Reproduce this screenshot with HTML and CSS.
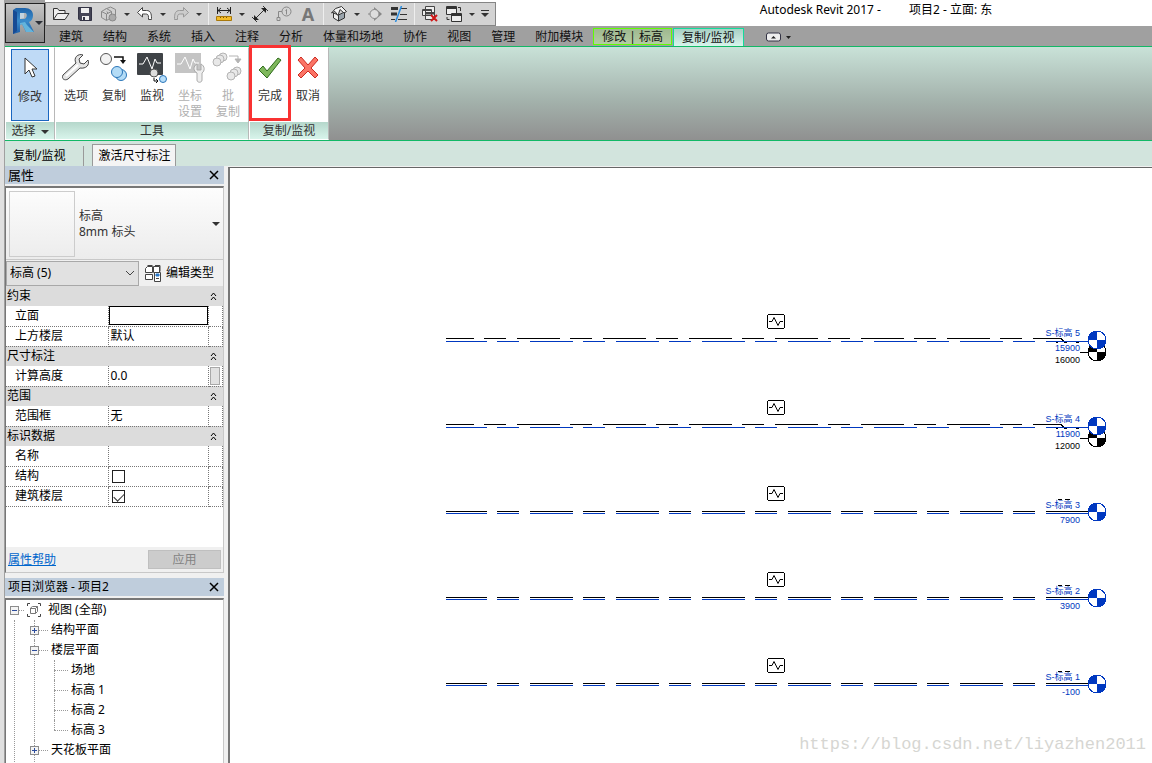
FILE: index.html
```
<!DOCTYPE html>
<html lang="zh-CN">
<head>
    <meta charset="UTF-8">
    <meta name="viewport" content="width=device-width, initial-scale=1.0">
    <title>Autodesk Revit 2017</title>
    <link rel="stylesheet" href="styles.css">
</head>
<body>
    <div class="app">
        <header class="header">
            <button type="button" class="app-button" aria-label="应用程序菜单">
                <svg width="38" height="38" viewBox="0 0 38 38">
                    <defs>
                        <linearGradient id="logo" x1="0" y1="0" x2="0" y2="1">
                            <stop offset="0" stop-color="#1e62a8"/>
                            <stop offset="0.5" stop-color="#3a8ccb"/>
                            <stop offset="1" stop-color="#1c5da8"/>
                        </linearGradient>
                    </defs>
                    <path fill-rule="evenodd" d="M7 6l3-2h9c5 0 8 3 8 7 0 3-1 6-4 7l5 10h-8l-4-8-2 1v7l-7 2zM14 9v6h4c3 0 4-6 1-6z" fill="url(#logo)"/>
                    <path d="M7 6l4 2v19l-4 3z" fill="#174b94"/>
                    <path d="M14 9h4v5l-4 1z" fill="#c3d4e0"/>
                    <path d="M14 19l5-1 2 3 7 7h-8l-4-8-2 1z" fill="#63b4dc"/>
                    <path d="M29 17h8l-4 4z" fill="#2c3038"/>
                </svg>
            </button>
            <div class="title-row">
                <div class="quick-access">
                    <button type="button" class="qa" aria-label="打开"><svg width="18" height="16" fill="#eee" stroke="#333"><path d="M1.500 13.500v-11h4l1.500 2h6v3"/><path d="M1.500 13.500l4-6h11.500l-4 6z"/></svg></button>
                    <button type="button" class="qa" aria-label="保存"><svg width="16" height="16"><path d="M1.500 1.500h13v13H3l-1.500-1.500z" fill="#445" stroke="#334"/><path d="M4 2h8v5H4zM5 10h7v4H5z" fill="#eee"/><path d="M6 11h2v3H6z" fill="#334"/></svg></button>
                    <button type="button" class="qa" aria-label="同步"><svg width="18" height="16" fill="#d0d0d0" stroke="#8a8a8a"><path d="M5.500 3l5-2 5 2.500v6l-5 2.500z"/><path d="M1.500 5.500l5-3 5 3v6l-5 3-5-3zM1.500 5.500l5 2.500 5-2.500M6.500 8v6"/><circle cx="12.500" cy="11.500" r="3.500" fill="#aaa"/></svg></button>
                    <button type="button" class="caret" aria-label="同步选项"></button>
                    <button type="button" class="qa" aria-label="放弃"><svg width="18" height="16" fill="#fff" stroke="#444"><path d="M1.500 6.500l5-5v3h4c4 0 5 3 5 8v1h-3v-2c0-3-1-3.500-3-3.500h-3v3z"/></svg></button>
                    <button type="button" class="caret" aria-label="放弃列表"></button>
                    <button type="button" class="qa" aria-label="重做"><svg width="18" height="16" fill="#ccc" stroke="#999"><path d="M16.500 6.500l-5-5v3h-4c-4 0-5 3-5 8v1h3v-2c0-3 1-3.500 3-3.500h3v3z"/></svg></button>
                    <button type="button" class="caret" aria-label="重做列表"></button>
                    <span class="qa-sep"></span>
                    <button type="button" class="qa" aria-label="测量"><svg width="16" height="16"><path d="M1.500 1v7M14.500 1v7M2 4.500h12M5 2L2 4.500 5 7M11 2l3 2.500L11 7" fill="none" stroke="#222"/><path d="M.5 10.500h15v4H.5z" fill="#f4bc28" stroke="#a8780c"/><path d="M4.500 11v1M7.500 11v1M10.500 11v1" stroke="#76540a"/></svg></button>
                    <button type="button" class="caret" aria-label="测量选项"></button>
                    <button type="button" class="qa" aria-label="对齐尺寸标注"><svg width="16" height="16"><path d="M3 13L13 3M0 11l5 5M11 0l5 5" stroke="#333"/><path d="M2 14v-5l5 5zM14 2v5L9 2z" fill="#222"/></svg></button>
                    <button type="button" class="qa" aria-label="按类别标记"><svg width="16" height="16" fill="none" stroke="#888"><circle cx="10.500" cy="5.500" r="4.500"/><path d="M6 5.500H2.500v6M1 11.500h3v3H1zM9.500 4.500l1-1v5"/></svg></button>
                    <button type="button" class="qa qa-text">A</button>
                    <span class="qa-sep"></span>
                    <button type="button" class="qa" aria-label="默认三维视图"><svg width="18" height="16" stroke="#333"><path d="M3.500 7v5l5 3v-6z" fill="#eee"/><path d="M8.500 9l6-3v6l-6 3z" fill="#9aa4ac"/><path d="M1.500 7l4-4.500 6-2 5 5-2.500 1.500-4-3.500L8 9.500l-3-4z" fill="#f4f4f4"/></svg></button>
                    <button type="button" class="caret" aria-label="视图选项"></button>
                    <button type="button" class="qa" aria-label="剖面"><svg width="16" height="16"><path d="M7 1l8 7-8 7z" fill="#888"/><circle cx="7.500" cy="8" r="4.500" fill="#ddd" stroke="#888"/><path d="M1 8h2" stroke="#888"/></svg></button>
                    <button type="button" class="qa" aria-label="细线"><svg width="18" height="16"><path d="M1 2.500h7M1 8h6" stroke="#333" stroke-width="3"/><path d="M1 13.500h4M11 2.500h6M10 8.500h7M8 13.500h9" stroke="#333"/><path d="M11.500 0L5.500 16" stroke="#2b8de0" stroke-width="1.500"/></svg></button>
                    <span class="qa-sep"></span>
                    <button type="button" class="qa" aria-label="关闭隐藏窗口"><svg width="18" height="16"><g fill="#eee" stroke="#444"><path d="M4.500 .5h9v7h-9zM1.500 3.500h9v6h-9zM4.500 6.500h9v7h-9z"/><path d="M4.500 8h9M1.500 4.500h9"/></g><path d="M10 9l6 6M16 9l-6 6" stroke="#d01818" stroke-width="2"/></svg></button>
                    <button type="button" class="qa" aria-label="切换窗口"><svg width="18" height="16" fill="#eee" stroke="#333"><path d="M1.500 .5h10v8h-10zM6.500 7.500h10v8h-10z"/><path d="M1.500 2h10M6.500 9h10" stroke-width="2"/><path d="M13 1.500h2.500V5M4.500 13.500H2V11" fill="none"/></svg></button>
                    <button type="button" class="caret" aria-label="窗口列表"></button>
                    <button type="button" class="qa-more" aria-label="自定义快速访问工具栏"><svg width="10" height="10" fill="#333"><path d="M1 1h8v1H1zM1 4h8L5 8z"/></svg></button>
                </div>
                <div class="window-title"><span>Autodesk Revit 2017 -</span><span>项目2 - 立面: 东</span></div>
            </div>
            <nav class="tabs">
                <button type="button" class="tab">建筑</button>
                <button type="button" class="tab">结构</button>
                <button type="button" class="tab">系统</button>
                <button type="button" class="tab">插入</button>
                <button type="button" class="tab">注释</button>
                <button type="button" class="tab">分析</button>
                <button type="button" class="tab">体量和场地</button>
                <button type="button" class="tab">协作</button>
                <button type="button" class="tab">视图</button>
                <button type="button" class="tab">管理</button>
                <button type="button" class="tab">附加模块</button>
                <button type="button" class="tab tab-context">修改 | 标高</button>
                <button type="button" class="tab tab-active">复制/监视</button>
                <button type="button" class="tab-toggle" aria-label="最小化功能区">
                    <svg width="26" height="10"><rect x=".5" y="1" width="14" height="8" rx="2" fill="#eee" stroke="#334"/><path d="M5 6.500h5L7.500 4zM20 4h5l-2.500 3z" fill="#222"/></svg>
                </button>
            </nav>
        </header>

        <section class="ribbon">
            <div class="panel">
                <div class="panel-tools">
                    <button type="button" class="tool tool-selected">
                        <svg width="32" height="32"><path d="M11 6v16l4-4 3 7 3-1-3-7h5z" fill="#fff" stroke="#333"/></svg>
                        <span>修改</span>
                    </button>
                </div>
                <button type="button" class="panel-title">选择 <i class="arrow"></i></button>
            </div>
            <div class="panel">
                <div class="panel-tools">
                    <button type="button" class="tool">
                        <svg width="32" height="32"><path d="M28 9l-4 4-4-1-1-4 4-4c-5-2-10 3-7 8L3 24c-2 4 2 6 5 4l12-11c6 1 10-3 8-8z" fill="#e4e4e4" stroke="#444"/><path d="M6 25L18 14" stroke="#fff" stroke-width="2"/></svg>
                        <span>选项</span>
                    </button>
                    <button type="button" class="tool">
                        <svg width="32" height="32"><circle cx="8" cy="8" r="5.500" fill="#f2f2f2" stroke="#555"/><path d="M16 6h9v5" fill="none" stroke="#111" stroke-width="1.500"/><path d="M22 9h6l-3 4z" fill="#111"/><g fill="#b4dcf6" stroke="#2a75b8"><circle cx="23" cy="24" r="5.500"/><circle cx="19" cy="21" r="5.500"/></g></svg>
                        <span>复制</span>
                    </button>
                    <button type="button" class="tool">
                        <svg width="32" height="32"><rect x="1" y="2" width="26" height="22" rx="1" fill="#3f4347"/><path d="M3 13h4l4-7 5 12 3-10 2 4h4" fill="none" stroke="#fff"/><circle cx="18" cy="22" r="4" fill="#ddd" stroke="#555"/><circle cx="27" cy="28" r="3.500" fill="#b7defa" stroke="#2a75b8"/><path d="M18 27v3h4M20 28l2 2-2 2" fill="none" stroke="#111"/></svg>
                        <span>监视</span>
                    </button>
                    <button type="button" class="tool" disabled>
                        <svg width="32" height="32"><path d="M1 2h26v20H1z" fill="#c4c4c4"/><path d="M3 13h4l4-7 5 12 3-10 2 4h4" fill="none" stroke="#fff"/><path d="M23 13v6h4v-6c4 2 4 7 1 9v7c0 3-5 3-5 0v-7c-4-2-4-7 0-9z" fill="#eee" stroke="#aaa"/></svg>
                        <span>坐标<br>设置</span>
                    </button>
                    <button type="button" class="tool" disabled>
                        <svg width="32" height="32" fill="#e8e8e8" stroke="#b4b4b4"><circle cx="11" cy="6" r="4"/><circle cx="8" cy="8" r="4"/><circle cx="5" cy="11" r="4"/><path d="M17 5h9v4" fill="none"/><path d="M23 8h6l-3 4z" fill="#b4b4b4"/><circle cx="25" cy="20" r="4"/><circle cx="22" cy="22" r="4"/><circle cx="19" cy="25" r="4"/></svg>
                        <span>批<br>复制</span>
                    </button>
                </div>
                <div class="panel-title">工具</div>
            </div>
            <div class="panel">
                <div class="panel-tools">
                    <button type="button" class="tool tool-marked">
                        <svg width="32" height="32"><path d="M5 19l4-4 4 5L24 7l3 2-14 18z" fill="#7fb85c" stroke="#2f6b1c"/></svg>
                        <span>完成</span>
                    </button>
                    <button type="button" class="tool">
                        <svg width="32" height="32"><path d="M6 9l3-3 7 8 7-8 3 3-7 8 7 7-3 3-7-7-7 7-3-3 7-7z" fill="#fb7466" stroke="#cc2a20" stroke-linejoin="round"/></svg>
                        <span>取消</span>
                    </button>
                </div>
                <div class="panel-title">复制/监视</div>
            </div>
        </section>

        <div class="options-bar">
            <span class="options-name">复制/监视</span>
            <button type="button" class="options-button">激活尺寸标注</button>
        </div>

        <main class="workspace">
            <aside class="sidebar">
                <section class="properties">
                    <div class="dock-title"><h2>属性</h2><button type="button" class="close" aria-label="关闭属性"><svg width="10" height="10"><path d="M1 1l8 8M9 1L1 9" stroke="#000" stroke-width="1.500"/></svg></button></div>
                    <div class="dock-body">
                        <button type="button" class="type-selector">
                            <span class="type-preview"></span>
                            <span class="type-name">标高<br>8mm 标头</span>
                            <i class="arrow"></i>
                        </button>
                        <div class="filter-row">
                            <select class="filter" aria-label="图元过滤器"><option>标高 (5)</option></select>
                            <svg class="filter-arrow" width="10" height="6"><path d="M1 1l4 4 4-4" fill="none" stroke="#444"/></svg>
                            <button type="button" class="edit-type">
                                <svg width="17" height="17" fill="#fff" stroke="#444"><path d="M.5 3.500l2-2h5v6h-7zM8.500 1.500h6v6h-6zM.5 9.500h7v5h-7zM2.500 .500h5M10 .500h5v6"/><path d="M9.500 7.500h6v9h-6z"/><path d="M11 9h3v2h-3z" fill="#2878c8" stroke="#2878c8"/><path d="M11 13.500h3"/></svg>
                                编辑类型
                            </button>
                        </div>
                        <table class="props">
                            <colgroup><col class="col-name"><col><col class="col-action"></colgroup>
                            <tr class="group"><th colspan="2">约束</th><td><svg width="7" height="8"><path d="M1 4l2.500-3L6 4M1 8l2.500-3L6 8"/></svg></td></tr>
                            <tr><th><label for="elevation">立面</label></th><td class="cell-input"><input type="text" id="elevation" class="value-input"></td><td></td></tr>
                            <tr><th>上方楼层</th><td>默认</td><td></td></tr>
                            <tr class="group"><th colspan="2">尺寸标注</th><td><svg width="7" height="8"><path d="M1 4l2.500-3L6 4M1 8l2.500-3L6 8"/></svg></td></tr>
                            <tr><th>计算高度</th><td>0.0</td><td class="cell-input"><button type="button" class="associate" aria-label="关联参数"></button></td></tr>
                            <tr class="group"><th colspan="2">范围</th><td><svg width="7" height="8"><path d="M1 4l2.500-3L6 4M1 8l2.500-3L6 8"/></svg></td></tr>
                            <tr><th>范围框</th><td>无</td><td></td></tr>
                            <tr class="group"><th colspan="2">标识数据</th><td><svg width="7" height="8"><path d="M1 4l2.500-3L6 4M1 8l2.500-3L6 8"/></svg></td></tr>
                            <tr><th>名称</th><td></td><td></td></tr>
                            <tr><th><label for="structural">结构</label></th><td><input type="checkbox" id="structural" class="check"></td><td></td></tr>
                            <tr><th><label for="story">建筑楼层</label></th><td><input type="checkbox" id="story" class="check" checked></td><td></td></tr>
                        </table>
                        <div class="props-footer">
                            <a href="#">属性帮助</a>
                            <button type="button" class="apply" disabled>应用</button>
                        </div>
                    </div>
                </section>

                <section class="browser">
                    <div class="dock-title"><h2 class="browser-title">项目浏览器 - 项目2</h2><button type="button" class="close" aria-label="关闭项目浏览器"><svg width="10" height="10"><path d="M1 1l8 8M9 1L1 9" stroke="#000" stroke-width="1.500"/></svg></button></div>
                    <div class="dock-body">
                        <ul class="tree">
                            <li>
                                <div class="node"><button type="button" class="toggle open" aria-label="折叠"></button><svg width="14" height="14" fill="none" stroke="#444"><path d="M3 .5H.5V3M11 .5h2.500V3M3 13.500H.5V11M11 13.500h2.500V11"/><path d="M3.500 5l2-1.500h5v5l-2 2h-5zM3.500 5.500h5v5M8.500 5.500l2-2" stroke="#777"/></svg><span>视图 (全部)</span></div>
                                <ul class="branches">
                                    <li><div class="node"><button type="button" class="toggle" aria-label="展开"></button><span>结构平面</span></div></li>
                                    <li>
                                        <div class="node"><button type="button" class="toggle open" aria-label="折叠"></button><span>楼层平面</span></div>
                                        <ul class="leaves">
                                            <li><div class="node"><span>场地</span></div></li>
                                            <li><div class="node"><span>标高 1</span></div></li>
                                            <li><div class="node"><span>标高 2</span></div></li>
                                            <li><div class="node"><span>标高 3</span></div></li>
                                        </ul>
                                    </li>
                                    <li><div class="node"><button type="button" class="toggle" aria-label="展开"></button><span>天花板平面</span></div></li>
                                </ul>
                            </li>
                        </ul>
                    </div>
                </section>
            </aside>

            <div class="canvas">
                <svg class="drawing">
                    <defs>
                        <g id="head">
                            <circle r="9" fill="#fff" stroke="currentColor"/>
                            <path d="M0 0V-9A9 9 0 0 0-9 0zM0 0V9A9 9 0 0 0 9 0z" fill="currentColor"/>
                        </g>
                        <g id="monitor" fill="none" stroke="#000">
                            <rect x="537.500" y="-25.500" width="17" height="14" rx="2"/>
                            <path d="M539 -18.500h3l2-4 4 8 2-4h3" shape-rendering="auto"/>
                        </g>
                        <!-- linked level and host level drawn apart -->
                        <g id="level-split">
                            <use href="#monitor"/>
                            <path class="line" stroke-dashoffset="15" d="M216 -1.500H831l4 4"/>
                            <path class="line blue" stroke-dashoffset="2" d="M216 1.500H858"/>
                            <path d="M826 2.500h2M834 2.500h3M846 2.500h3M850 12.500h8" stroke="#000"/>
                            <use href="#head" x="867" y="12"/>
                            <use href="#head" class="blue" x="867" y="0"/>
                        </g>
                        <!-- both levels at the same height -->
                        <g id="level-same">
                            <use href="#monitor"/>
                            <path class="line" stroke-dashoffset="2" d="M216 -0.500H858"/>
                            <path class="line blue" stroke-dashoffset="2" d="M216 1.500H858"/>
                            <path d="M828 -12.500h4M835 -12.500h5" stroke="#000"/>
                            <use href="#head" class="blue" x="867" y="0"/>
                        </g>
                    </defs>
                    <g transform="translate(0 172)">
                        <use href="#level-split"/>
                        <text class="blue" x="850" y="-4">S-标高 5</text>
                        <text class="blue" x="850" y="11">15900</text>
                        <text x="850" y="23">16000</text>
                    </g>
                    <g transform="translate(0 258)">
                        <use href="#level-split"/>
                        <text class="blue" x="850" y="-4">S-标高 4</text>
                        <text class="blue" x="850" y="11">11900</text>
                        <text x="850" y="23">12000</text>
                    </g>
                    <g transform="translate(0 344)">
                        <use href="#level-same"/>
                        <text class="blue" x="850" y="-4">S-标高 3</text>
                        <text class="blue" x="850" y="11">7900</text>
                    </g>
                    <g transform="translate(0 430)">
                        <use href="#level-same"/>
                        <text class="blue" x="850" y="-4">S-标高 2</text>
                        <text class="blue" x="850" y="11">3900</text>
                    </g>
                    <g transform="translate(0 516)">
                        <use href="#level-same"/>
                        <text class="blue" x="850" y="-4">S-标高 1</text>
                        <text class="blue" x="850" y="11">-100</text>
                    </g>
                </svg>
                <div class="watermark">https://blog.csdn.net/liyazhen2011</div>
            </div>
        </main>
    </div>
</body>
</html>
```
FILE: styles.css
```
* {
    box-sizing: border-box;
}
body {
    margin: 0;
    background-color: #e0e0e0;
    color: #000;
    font-family: "Noto Sans", "Noto Sans CJK SC", sans-serif;
    font-size: 12px;
    line-height: 16px;
}
button, input, select {
    font: inherit;
    color: inherit;
    margin: 0;
    padding: 0;
    border: none;
    background: none;
    border-radius: 0;
}
svg {
    display: block;
    flex: none;
}
.app {
    display: flex;
    flex-direction: column;
    height: 100vh;
    margin-left: 4px;
    overflow: hidden;
    background-color: #f0f0f0;
    border-left: 1px solid #a0a0a0;
}

/* title bar and tabs */
.header {
    display: grid;
    grid-template-columns: 40px 1fr;
    grid-template-rows: 26px 20px;
    background-color: #a0a0a0;
}
.app-button {
    grid-row: 1 / 3;
    align-self: center;
    height: 40px;
    border: 1px solid #222;
    background: linear-gradient(#c4c4c4, #8c8c8c);
}
.title-row {
    display: flex;
    align-items: flex-end;
    background-color: #fff;
}
.quick-access {
    display: flex;
    align-items: center;
    height: 24px;
    padding: 0 3px;
    background-color: #d3d3d3;
    border: 1px solid #858585;
}
.qa {
    display: flex;
    align-items: center;
    justify-content: center;
    width: 24px;
    height: 20px;
}
.qa-text {
    color: #777;
    font-size: 18px;
    font-weight: bold;
}
.caret {
    display: flex;
    justify-content: center;
    width: 12px;
}
.caret::after, .arrow {
    content: "";
    border: 3px solid transparent;
    border-top-color: #333;
    border-bottom: none;
}
.qa-sep {
    width: 1px;
    height: 22px;
    margin: 0 3px;
    background-color: #eee;
}
.qa-more {
    padding: 0 2px;
}
.window-title {
    flex: 1;
    display: flex;
    justify-content: center;
    gap: 28px;
    height: 24px;
    padding-left: 104px;
}
.tabs {
    display: flex;
    align-items: flex-end;
    padding-left: 4px;
}
.tab {
    height: 18px;
    padding: 0 10px;
    color: #111;
    white-space: nowrap;
}
.tab-context {
    height: 17px;
    margin: 0 1px 1px 0;
    padding: 0 8px;
    line-height: 14px;
    background: linear-gradient(#9fb890, #b4cca4);
    border: 1px solid #5eff00;
}
.tab-active {
    padding: 0 8px;
    background: linear-gradient(#a9d0c4, #d8f4ec);
    border: 1px solid #12dc9c;
    border-bottom: none;
}
.tab-toggle {
    padding: 4px 22px;
}

/* ribbon */
.ribbon {
    display: flex;
    height: 95px;
    background: linear-gradient(#c9e2d8, #a2b0aa 60%, #909090);
    border-top: 1px solid #12b866;
    border-bottom: 1px solid #12b866;
}
.panel {
    display: flex;
    flex-direction: column;
    background-color: #fff;
    border: 1px solid #fff;
    border-right-color: #b8b8b8;
}
.panel-tools {
    flex: 1;
    display: flex;
    padding: 1px;
}
.tool {
    display: flex;
    flex-direction: column;
    align-items: center;
    gap: 5px;
    width: 38px;
    padding-top: 2px;
    color: #333;
}
.tool:disabled {
    color: #b0b0b0;
}
.panel:first-child .panel-tools {
    padding: 1px 5px;
}
.tool-selected {
    height: 72px;
    background-color: #bfdaf6;
    border: 1px solid #1a66c0;
}
.tool-marked {
    position: relative;
}
/* red frame round the finish button */
.tool-marked::after {
    content: "";
    position: absolute;
    inset: -4px -2px 0;
    border: 3px solid #f93232;
}
.panel-title {
    height: 17px;
    line-height: 18px;
    text-align: center;
    color: #333;
    background: linear-gradient(#b5d7cb, #d8f4eb);
}
.panel-title .arrow {
    display: inline-block;
    margin-left: 2px;
    border-width: 4px;
    border-bottom: none;
    vertical-align: middle;
}

/* options bar */
.options-bar {
    display: flex;
    align-items: flex-end;
    height: 25px;
    background-color: #d2e4dd;
}
.options-name {
    height: 20px;
    padding: 0 18px 0 8px;
    line-height: 20px;
    border-right: 1px solid #999;
}
.options-button {
    height: 22px;
    margin-left: 8px;
    padding: 0 5px;
    background-color: #f4f4f4;
    border: 1px solid #999;
    border-bottom: none;
}

/* docked panels */
.workspace {
    flex: 1;
    display: flex;
    min-height: 0;
}
.sidebar {
    display: flex;
    flex-direction: column;
    width: 223px;
    padding-right: 4px;
}
.properties {
    display: flex;
    flex-direction: column;
    height: 407px;
    margin-bottom: 5px;
}
.dock-title {
    display: flex;
    align-items: center;
    justify-content: space-between;
    height: 18px;
    padding: 0 5px 0 3px;
    background-color: #bfcddc;
}
.dock-title h2 {
    margin: 0;
    font-size: 13px;
    font-weight: normal;
}
.dock-title .browser-title {
    font-size: 12px;
}
.dock-body {
    flex: 1;
    display: flex;
    flex-direction: column;
    margin-top: 2px;
    min-height: 0;
    background-color: #fff;
    border: 1px solid #c8c8c8;
    border-top: 2px solid #777;
    border-left-color: #777;
}
.type-selector {
    display: flex;
    align-items: center;
    height: 72px;
    padding: 0 3px;
    text-align: left;
    color: #333;
    background: linear-gradient(#fdfdfd, #ececec);
    border-bottom: 1px solid #c8c8c8;
}
.type-preview {
    width: 66px;
    height: 66px;
    border: 1px solid #ccc;
}
.type-name {
    flex: 1;
    padding-left: 4px;
}
.type-selector .arrow {
    border-width: 4px;
    border-bottom: none;
}
.filter-row {
    display: flex;
    align-items: center;
    height: 26px;
    background-color: #f0f0f0;
}
.filter {
    width: 133px;
    height: 25px;
    padding: 0 3px;
    appearance: none;
    background-color: #e1e1e1;
    border: 1px solid #a8a8a8;
}
.filter-arrow {
    margin: 0 4px 0 -14px;
    pointer-events: none;
}
.edit-type {
    display: flex;
    align-items: center;
    gap: 4px;
    margin-left: 6px;
    white-space: nowrap;
}
.props {
    width: 100%;
    table-layout: fixed;
    border-collapse: collapse;
}
.col-name {
    width: 102px;
}
.col-action {
    width: 14px;
}
.props th, .props td {
    height: 20px;
    padding: 0 2px;
    font-weight: normal;
    text-align: left;
    border: 1px dotted #777;
    border-width: 0 1px 1px 0;
}
.props th {
    padding-left: 9px;
}
.props .group th, .props .group td {
    padding: 0 1px;
    background-color: #dcdcdc;
    border: none;
}
.group svg {
    fill: none;
    stroke: #000;
}
.props .cell-input {
    padding: 0;
}
.value-input {
    display: block;
    width: 100%;
    height: 19px;
    border: 1px solid #000;
}
.associate {
    display: block;
    width: 10px;
    height: 18px;
    margin-left: 1px;
    background-color: #e1e1e1;
    border: 1px solid #a8a8a8;
}
.check {
    display: block;
    width: 13px;
    height: 13px;
    margin-left: 1px;
    appearance: none;
    border: 1px solid #222;
}
.check:checked::after {
    content: "";
    display: block;
    width: 9px;
    height: 5px;
    margin: 2px 1px;
    border: solid #333;
    border-width: 0 0 1px 1px;
    transform: rotate(-45deg);
}
.props-footer {
    display: flex;
    align-items: center;
    justify-content: space-between;
    height: 25px;
    margin-top: auto;
    padding: 0 2px;
    background-color: #f0f0f0;
}
.props-footer a {
    color: #0066cc;
}
.apply {
    width: 73px;
    height: 19px;
    color: #838383;
    background-color: #ccc;
    border: 1px solid #bfbfbf;
}

/* project browser */
.browser {
    flex: 1;
    display: flex;
    flex-direction: column;
    min-height: 0;
}
.browser .dock-body {
    border-bottom: none;
    overflow: hidden;
}
.tree, .tree ul {
    margin: 0;
    padding: 0;
    list-style: none;
}
.tree {
    padding-left: 4px;
}
.node {
    display: flex;
    align-items: center;
    height: 20px;
}
.node svg {
    margin-right: 7px;
}
.node::before {
    content: "";
    order: 1;
    width: 9px;
    margin-right: 3px;
    border-top: 1px dotted #999;
}
.tree > li > .node::before {
    width: 5px;
}
.node .toggle ~ * {
    order: 2;
}
.toggle {
    display: grid;
    place-items: center;
    width: 9px;
    height: 9px;
    background-color: #f4f4f4;
    border: 1px solid #8c8c8c;
}
.toggle::before, .toggle:not(.open)::after {
    content: "";
    grid-area: 1 / 1;
    width: 5px;
    height: 1px;
    background-color: #2c4c9c;
}
.toggle:not(.open)::after {
    width: 1px;
    height: 5px;
}
.tree .branches {
    margin-left: 4px;
    padding-left: 19px;
    border-left: 1px dotted #999;
}
.branches > li {
    border-left: 1px dotted #999;
}
.branches > li:last-child {
    padding-bottom: 20px;
}
.branches > li > .node {
    margin-left: -5px;
}
.tree .leaves {
    padding-left: 19px;
}
.leaves .node {
    position: relative;
}
.leaves .node::before {
    order: 0;
    width: 14px;
}
/* trunk of the leaf rows, stopping at the last one */
.leaves .node::after {
    content: "";
    position: absolute;
    top: 0;
    left: 0;
    height: 20px;
    border-left: 1px dotted #999;
}
.leaves li:last-child .node::after {
    height: 10px;
}

/* drawing area */
.canvas {
    flex: 1;
    position: relative;
    min-width: 0;
    margin-top: 1px;
    background-color: #fff;
    border-top: 1px solid #666;
    border-left: 2px solid #777;
}
.drawing {
    width: 100%;
    height: 100%;
    font-family: "Liberation Sans", "Noto Sans CJK SC", sans-serif;
    font-size: 9px;
    text-anchor: end;
    shape-rendering: crispEdges;
}
.line {
    fill: none;
    stroke: #000;
    stroke-dasharray: 43 10 22 11;
}
.blue {
    color: #0038c0;
}
text.blue {
    fill: #0038c0;
}
.line.blue {
    stroke: #0038c0;
}
.watermark {
    position: absolute;
    right: 6px;
    bottom: 8px;
    color: #d6d6d2;
    font-family: "Liberation Mono", monospace;
    font-size: 17px;
    line-height: 20px;
}
```
